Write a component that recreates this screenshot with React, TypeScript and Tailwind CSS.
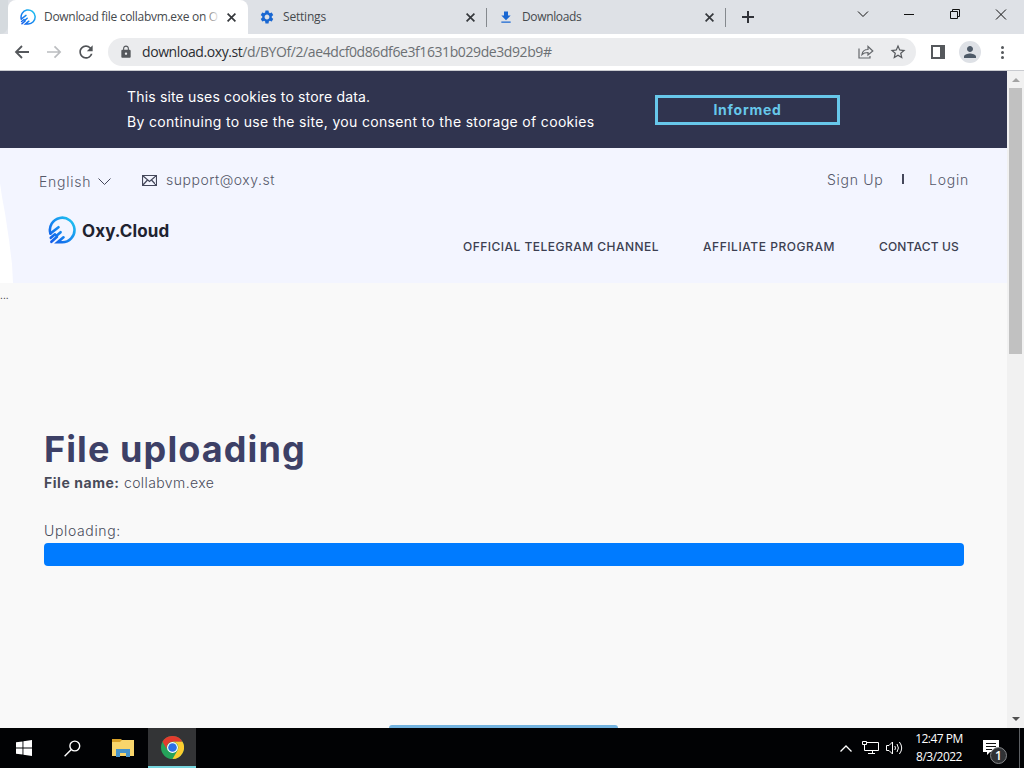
import type { ReactNode } from 'react';
import { MdSettings, MdDownload, MdLock, MdStarOutline, MdRefresh, MdPerson } from 'react-icons/md';

interface TabProps {
  icon: ReactNode;
  title: string;
  className?: string;
}

interface IconProps {
  className?: string;
}

function OxyLogo({ className }: IconProps) {
  return (
    <svg viewBox="0 0 28 28" className={className} fill="none">
      <defs>
        <linearGradient id="oxy" x1="0" y1="28" x2="28" y2="0" gradientUnits="userSpaceOnUse">
          <stop offset="0" stopColor="#1251e6" />
          <stop offset="0.5" stopColor="#168cf0" />
          <stop offset="1" stopColor="#22d3ee" />
        </linearGradient>
      </defs>
      <g stroke="url(#oxy)" strokeWidth="2.6" strokeLinecap="round">
        <path d="M2.4 17.5A12.3 12.3 0 1 1 14 26.3L9.6 26.3L15.5 21.3" />
        <path d="M2.4 17.5L10.5 11.2" />
        <path d="M2.8 21.8L7 18.3M8.5 19.8L12.6 16.2" />
        <path d="M3.4 25.8L9 20.8" />
      </g>
    </svg>
  );
}

function CloseIcon({ className }: IconProps) {
  return (
    <svg viewBox="0 0 8 8" className={className} stroke="#35383c" strokeWidth="1.5">
      <path d="M0.5 0.5L7.5 7.5M7.5 0.5L0.5 7.5" />
    </svg>
  );
}

function Tab({ icon, title, className }: TabProps) {
  return (
    <div className={`flex h-[34px] items-center whitespace-nowrap text-[12px] text-[#45494d] ${className}`}>
      <span className="flex w-[16px] shrink-0 justify-center">{icon}</span>
      <span className="ml-2 flex-1">{title}</span>
      <CloseIcon className="size-[9px] shrink-0" />
    </div>
  );
}

function TabStrip() {
  return (
    <div className="flex h-[34px] bg-[#dee1e6]">
      <div className="w-[8px] rounded-br-lg bg-[#d5dade]" />
      <div className="relative w-[240px] rounded-t-lg bg-white">
        <Tab
          icon={<OxyLogo className="size-[16px]" />}
          title="Download file collabvm.exe on O"
          className="pl-[12px] pr-[12px] tracking-[-0.3px]"
        />
        <div className="absolute right-[28px] top-2 h-[20px] w-[16px] bg-linear-to-r from-white/0 to-white" />
      </div>
      <Tab
        icon={<MdSettings className="size-[16px] text-[#1967d2]" />}
        title="Settings"
        className="w-[238px] pl-[11px] pr-[11px] tracking-[-0.2px]"
      />
      <div className="mt-2 h-[19px] w-px bg-[#85898e]" />
      <Tab
        icon={<MdDownload className="size-[17px] text-[#1967d2]" />}
        title="Downloads"
        className="w-[238px] pl-[11px] pr-[11px] tracking-[-0.35px]"
      />
      <div className="mt-2 h-[19px] w-px bg-[#85898e]" />
      <svg viewBox="0 0 12 12" className="ml-4 mt-[11px] size-[12px]" stroke="#303238" strokeWidth="2">
        <path d="M6 0V12M0 6H12" />
      </svg>
      <div className="ml-auto flex">
        <svg viewBox="0 0 162 34" className="h-[34px] w-[170px]" preserveAspectRatio="xMaxYMid" fill="none" stroke="#111">
          <path d="M-4 11.5L1 16.5L6 11.5M42 14.5H52M88.5 11.5H95.5V18.5H88.5ZM90.5 11.5V9.5H97.5V16.5H95.5M134 9.5L144 19.5M144 9.5L134 19.5" />
        </svg>
      </div>
    </div>
  );
}

function Toolbar() {
  return (
    <div className="flex h-[37px] items-center border-b border-[#c9cbd0] bg-white">
      <svg viewBox="0 0 16 14" className="ml-[14px] h-[14px] w-[16px]" fill="none" stroke="#55585c" strokeWidth="1.8">
        <path d="M15 7H2M8 1L2 7L8 13" />
      </svg>
      <svg viewBox="0 0 16 14" className="ml-[17px] h-[14px] w-[15px]" fill="none" stroke="#bbbdc0" strokeWidth="1.8">
        <path d="M0 7H14M8 1L14 7L8 13" />
      </svg>
      <MdRefresh className="ml-[14px] size-[20px] text-[#505357]" />
      <div className="ml-[12px] flex h-[28px] w-[808px] items-center rounded-full bg-[#ebecee]">
        <MdLock className="ml-[11px] size-[14px] text-[#55585c]" />
        <span className="-mt-px ml-[9px] whitespace-nowrap text-[14px] tracking-[-0.41px] text-[#6c7074]">
          <span className="text-[#2b2e32]">download.oxy.st</span>/d/BYOf/2/ae4dcf0d86df6e3f1631b029de3d92b9#
        </span>
        <svg viewBox="0 0 16 14" className="ml-auto h-[14px] w-[16px]" fill="none" stroke="#65686c" strokeWidth="1.2">
          <path d="M1 3.5V13H12V11M4 9.5C4.5 6 6.5 4.5 10 4.5V1.5L14.8 6L10 10V7.5C7 7.5 5.5 8 4 9.5Z" />
        </svg>
        <MdStarOutline className="ml-[15px] mr-[9px] size-[18px] text-[#55585c]" />
      </div>
      <svg viewBox="0 0 14 14" className="ml-[15px] size-[14px]" fill="#55585c">
        <path d="M0 0H14V14H0ZM2 2V12H9V2Z" fillRule="evenodd" />
      </svg>
      <div className="ml-[14px] flex size-[22px] items-center justify-center rounded-full bg-[#dee1e6]">
        <MdPerson className="size-[18px] text-[#4e5a68]" />
      </div>
      <div className="ml-[19px] flex w-[4px] flex-col items-center gap-[2px]">
        <i className="size-[3px] rounded-full bg-[#55585c]" />
        <i className="size-[3px] rounded-full bg-[#55585c]" />
        <i className="size-[3px] rounded-full bg-[#55585c]" />
      </div>
    </div>
  );
}

function CookieBanner() {
  return (
    <div className="flex h-[77px] bg-[#30344f] text-[14px] text-white">
      <p className="ml-[127px] mt-[13px] w-[528px] whitespace-nowrap leading-[25px]">
        <span className="tracking-[0.17px]">This site uses cookies to store data.</span>
        <br />
        <span className="tracking-[0.33px]">By continuing to use the site, you consent to the storage of cookies</span>
      </p>
      <button className="mt-[24px] h-[30px] w-[185px] border-3 border-[#67c7ea] text-[14px] font-bold leading-[24px] tracking-[0.75px] text-[#67c7ea]">
        Informed
      </button>
    </div>
  );
}

function SiteHeader() {
  return (
    <header className="relative h-[135px] bg-[#f3f5ff] text-[#555869]">
      <svg viewBox="0 0 14 135" className="absolute left-0 top-0 h-[135px] w-[14px]" fill="#fff">
        <path d="M0 35L2 49L5 65L9 92L12 116L13 135H0Z" />
      </svg>
      <div className="relative flex h-[66px] whitespace-nowrap pl-[39px] text-[14px] font-light">
        <span className="mt-[24px] w-[52px] leading-5 tracking-[0.75px]">English</span>
        <svg viewBox="0 0 13 8" className="ml-[7px] mt-[30px] h-[8px] w-[13px]" fill="none" stroke="#44475a">
          <path d="M0.5 0.5L6.5 6.5L12.5 0.5" />
        </svg>
        <svg viewBox="0 0 15 11" className="ml-[31px] mt-[27px] h-[11px] w-[15px]" fill="none" stroke="#44475a">
          <path d="M0.5 0.5H14.5V10.5H0.5ZM0.5 0.5L7.5 6.5L14.5 0.5M0.5 10.5L5.5 5M14.5 10.5L9.5 5" strokeWidth="1.2" />
        </svg>
        <span className="ml-[9px] mt-[22px] leading-5 tracking-[0.52px]">support@oxy.st</span>
        <span className="ml-auto mt-[22px] w-[75px] leading-5 tracking-[0.7px]">Sign Up</span>
        <span className="mt-[26px] h-[10px] w-[2px] bg-[#44475a]" />
        <span className="ml-[25px] mr-[39px] mt-[22px] w-[39px] leading-5 tracking-[0.75px]">Login</span>
      </div>
      <div className="relative flex whitespace-nowrap pl-[48px]">
        <OxyLogo className="mt-[2px] size-[28px]" />
        <span className="ml-[6px] mt-[5px] w-[88px] text-[17px] font-bold leading-6 tracking-[0.1px] text-[#20222f]">
          Oxy.Cloud
        </span>
        <nav className="ml-auto mr-[47px] mt-[23px] flex text-[12px] font-medium leading-5 text-[#3c3f51]">
          <a className="w-[240px] tracking-[0.48px]">OFFICIAL TELEGRAM CHANNEL</a>
          <a className="w-[176px] tracking-[0.55px]">AFFILIATE PROGRAM</a>
          <a className="w-[81px] tracking-[0.15px]">CONTACT US</a>
        </nav>
      </div>
    </header>
  );
}

function UploadPage() {
  return (
    <main className="flex h-full w-[1007px] flex-col bg-[#f9f9f9] font-[Inter,'Open_Sans',sans-serif]">
      <CookieBanner />
      <SiteHeader />
      <div className="h-[144px] text-[10px] leading-[25px] text-[#333]">...</div>
      <section className="mx-[44px] w-[920px] whitespace-nowrap text-[14px] text-[#484b59]">
        <h1 className="h-[44px] text-[36px] font-bold leading-[44px] tracking-[1.1px] text-[#3d4066]">File uploading</h1>
        <p className="h-[24px] font-light leading-[24px] tracking-[0.4px]">
          <b className="font-bold tracking-[0.55px]">File name:</b> collabvm.exe
        </p>
        <p className="mt-[24px] h-[24px] font-light leading-[24px] tracking-[0.65px]">Uploading:</p>
        <div className="h-[23px] rounded-[4px] bg-[#007bff]" />
      </section>
      <div className="mx-auto mt-auto h-[3px] w-[229px] rounded-t-[3px] bg-[#73b3df]" />
    </main>
  );
}

function Scrollbar() {
  return (
    <div className="flex w-[17px] flex-col items-center bg-[#f1f1f1]">
      <svg viewBox="0 0 8 4" className="mt-[7px] h-[4px] w-[8px]" fill="#a3a3a3">
        <path d="M4 0L8 4H0Z" />
      </svg>
      <div className="mt-[6px] h-[266px] w-[13px] bg-[#c1c1c1]" />
      <svg viewBox="0 0 8 4" className="mb-[7px] mt-auto h-[4px] w-[8px]" fill="#505050">
        <path d="M0 0H8L4 4Z" />
      </svg>
    </div>
  );
}

function Taskbar() {
  return (
    <footer className="flex h-[40px] items-center bg-[#010204] text-white">
      <svg viewBox="0 0 16 16" className="ml-[16px] size-[16px]" fill="#fff">
        <path d="M0 2.3L6.5 1.4V7.5H0ZM7.4 1.2L16 0V7.5H7.4ZM0 8.4H6.5V14.6L0 13.7ZM7.4 8.4H16V16L7.4 14.8Z" />
      </svg>
      <svg viewBox="0 0 17 17" className="ml-[32px] size-[17px]" fill="none" stroke="#fff" strokeWidth="1.4">
        <circle cx="10.8" cy="6" r="4.9" />
        <path d="M7.3 9.5L0.6 16.2" />
      </svg>
      <svg viewBox="0 0 22 18" className="ml-[31px] h-[18px] w-[22px]">
        <path d="M0 0H8L10 1H22V17H0Z" fill="#f8d56b" />
        <path d="M0 0H8L10 1L8 3H0Z" fill="#d8a128" />
        <path d="M4 10H18V18H14V14H8V18H4Z" fill="#4693ca" />
      </svg>
      <div className="ml-[14px] flex h-full w-[48px] items-center justify-center border-b-2 border-[#76d5de] bg-[#333436]">
        <svg viewBox="0 0 24 24" className="size-[23px]">
          <circle cx="12" cy="12" r="12" fill="#25a35a" />
          <path d="M1.6 6A12 12 0 0 1 22.4 6H12A6 6 0 0 0 6.8 15Z" fill="#e33b2e" />
          <path d="M22.4 6A12 12 0 0 1 12 24L17.2 15A6 6 0 0 0 12 6Z" fill="#fdcc2f" />
          <circle cx="12" cy="12" r="5.7" fill="#fff" />
          <circle cx="12" cy="12" r="4.5" fill="#2b70e4" />
        </svg>
      </div>
      <svg viewBox="0 0 12 7" className="ml-auto h-[7px] w-[12px]" fill="none" stroke="#fff" strokeWidth="1.3">
        <path d="M0.5 6.5L6 1L11.5 6.5" />
      </svg>
      <svg viewBox="0 0 17 14" className="ml-[10px] h-[14px] w-[17px]" fill="none" stroke="#fff">
        <path d="M5 1.5H16.5V9.5H2.5V4M10.5 9.5V12.5M6 12.5H13M0.5 0.5H4.5V3.5H0.5Z" />
      </svg>
      <svg viewBox="0 0 17 14" className="ml-[7px] h-[14px] w-[17px]" fill="none" stroke="#fff">
        <path d="M0.5 4.5H3L6.5 1V13L3 9.5H0.5ZM8.8 5Q10.2 7 8.8 9M11 3Q13.8 7 11 11M13.4 1Q18 7 13.4 13" />
      </svg>
      <div className="ml-[10px] w-[52px] whitespace-nowrap text-center text-[12px] leading-[18px] tracking-[-0.5px]">
        <div>12:47 PM</div>
        <div>8/3/2022</div>
      </div>
      <div className="relative ml-[18px] h-[24px] w-[24px]">
        <svg viewBox="0 0 16 16" className="absolute left-0 top-[4px] size-[16px]">
          <path d="M0 0H16V12H7L4 15V12H0Z" fill="#fff" />
          <path d="M3 3.5H13M3 6.5H13M3 9.5H9" stroke="#111" />
        </svg>
        <span className="absolute left-[7px] top-[11px] flex size-[17px] items-center justify-center rounded-full border border-[#85878a] bg-[#303235] text-[12px] font-semibold">
          1
        </span>
      </div>
      <div className="ml-[12px] mr-[4px] h-full w-px bg-[#5d6064]" />
    </footer>
  );
}

export default function App() {
  return (
    <div className="flex h-[768px] w-[1024px] flex-col overflow-hidden font-['Open_Sans','Noto_Sans',sans-serif]">
      <TabStrip />
      <Toolbar />
      <div className="flex h-[657px]">
        <UploadPage />
        <Scrollbar />
      </div>
      <Taskbar />
    </div>
  );
}
